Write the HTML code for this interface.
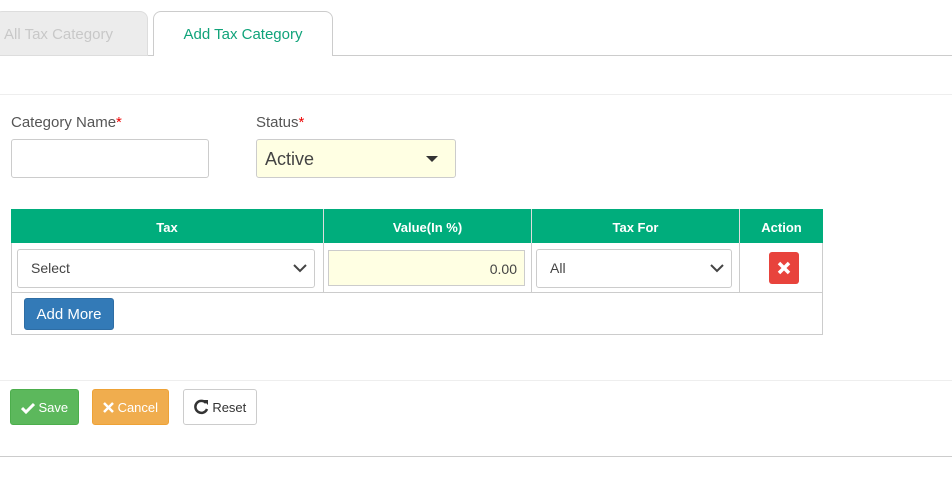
<!DOCTYPE html>
<html><head><style>
*{box-sizing:border-box;margin:0;padding:0}
body{width:952px;height:478px;background:#fff;font-family:"Liberation Sans",sans-serif;position:relative;overflow:hidden;color:#555}
.a{position:absolute}
.tab{position:absolute;top:11px;height:45px;border-radius:8px 8px 0 0;font-size:15px;line-height:46px}
.sel{position:absolute;border:1px solid #ccc;border-radius:3px;background:#fff;font-size:14px;color:#444;padding-left:13px;line-height:37px}
.btn{position:absolute;top:389px;height:36px;border-radius:3px;font-size:13px;line-height:36px;text-align:center}
</style></head><body>
<div class="tab" style="left:-6px;width:154px;background:#ececec;color:#c8c8c8;padding-left:9px;border:1px solid #ddd">All Tax Category</div>
<div class="tab" style="left:153px;width:180px;border:1px solid #ccc;border-bottom:none;background:#fff;color:#10a37a;text-align:center;height:45px;z-index:2">Add Tax Category</div>
<div class="a" style="left:148px;right:0;top:55px;height:1px;background:#ccc"></div>
<div class="a" style="left:0;right:0;top:94px;height:1px;background:#eee"></div>
<div class="a" style="left:11px;top:114px;font-size:15px">Category Name<span style="color:#e00">*</span></div>
<div class="a" style="left:256px;top:114px;font-size:15px">Status<span style="color:#e00">*</span></div>
<div class="a" style="left:11px;top:139px;width:198px;height:39px;border:1px solid #ccc;border-radius:3px"></div>
<div class="a" style="left:256px;top:139px;width:200px;height:39px;border:1px solid #ccc;border-radius:3px;background:#ffffe3;font-size:18px;line-height:39px;padding-left:8px;color:#444">Active<span class="a" style="right:17px;top:16px;border:6px solid transparent;border-top:6px solid #333;border-bottom:none"></span></div>
<div class="a" style="left:11px;top:209px;width:812px;height:126px;border:1px solid #ccc"></div>
<div class="a" style="left:11px;top:209px;width:812px;height:34px;background:#00ad7c;color:#fff;font-size:13px;font-weight:bold;line-height:37px">
<span class="a" style="left:0;width:312px;text-align:center">Tax</span>
<span class="a" style="left:312px;width:208px;text-align:center;border-left:1px solid #ddd">Value(In %)</span>
<span class="a" style="left:520px;width:208px;text-align:center;border-left:1px solid #ddd">Tax For</span>
<span class="a" style="left:728px;width:84px;text-align:center;border-left:1px solid #ddd">Action</span>
</div>
<div class="a" style="left:323px;top:243px;width:1px;height:50px;background:#ccc"></div>
<div class="a" style="left:531px;top:243px;width:1px;height:50px;background:#ccc"></div>
<div class="a" style="left:739px;top:243px;width:1px;height:50px;background:#ccc"></div>
<div class="a" style="left:11px;top:292px;width:812px;height:1px;background:#ccc"></div>
<div class="sel" style="left:17px;top:249px;width:298px;height:39px">Select<svg class="a" style="right:7px;top:14px" width="14" height="9"><path d="M1 1l6 6 6-6" stroke="#444" stroke-width="2" fill="none"/></svg></div>
<div class="a" style="left:328px;top:250px;width:197px;height:36px;border:1px solid #ccc;background:#ffffe3;font-size:14px;text-align:right;padding-right:7px;line-height:36px;color:#444">0.00</div>
<div class="sel" style="left:536px;top:249px;width:196px;height:39px">All<svg class="a" style="right:7px;top:14px" width="14" height="9"><path d="M1 1l6 6 6-6" stroke="#444" stroke-width="2" fill="none"/></svg></div>
<div class="a" style="left:769px;top:252px;width:30px;height:32px;background:#e8433c;border-radius:3px"><svg class="a" style="left:8px;top:9px" width="14" height="14"><path d="M2 2l10 10M12 2l-10 10" stroke="#fff" stroke-width="3.5"/></svg></div>
<div class="a" style="left:24px;top:298px;width:90px;height:32px;background:#337ab7;border:1px solid #2e6da4;border-radius:3px;color:#fff;font-size:15px;line-height:31px;text-align:center">Add More</div>
<div class="a" style="left:0;right:0;top:380px;height:1px;background:#eee"></div>
<div class="btn" style="left:10px;width:69px;background:#5cb85c;border:1px solid #4cae4c;color:#fff"><svg style="vertical-align:-2px" width="14" height="12"><path d="M1 6l4 4 8-8" stroke="#fff" stroke-width="3" fill="none"/></svg> Save</div>
<div class="btn" style="left:92px;width:77px;background:#f0ad4e;border:1px solid #eea236;color:#fff"><svg style="vertical-align:-1px" width="11" height="11"><path d="M1 1l9 9M10 1l-9 9" stroke="#fff" stroke-width="2.5"/></svg> Cancel</div>
<div class="btn" style="left:183px;width:74px;background:#fff;border:1px solid #ccc;color:#333"><svg style="vertical-align:-3px" width="15" height="16"><path d="M12 4A6 6 0 1 0 13 10" stroke="#333" stroke-width="2.5" fill="none"/><path d="M9 1h5v5z" fill="#333"/></svg> Reset</div>
<div class="a" style="left:0;right:0;top:456px;height:1px;background:#ccc"></div>
</body></html>
